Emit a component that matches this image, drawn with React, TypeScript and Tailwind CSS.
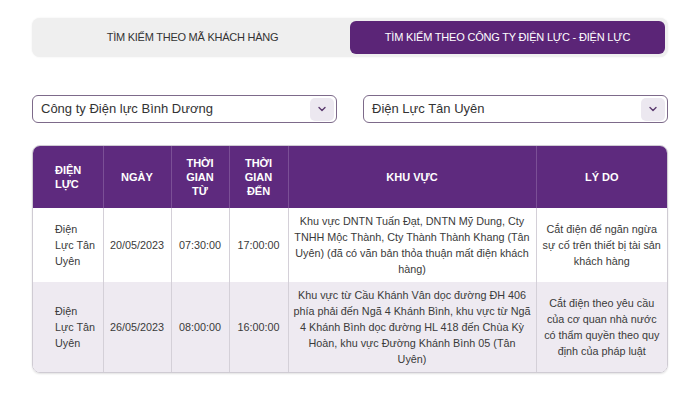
import React from "react";

const font = { fontFamily: '"Liberation Sans", Arial, Helvetica, sans-serif' };

function Chevron() {
  return (
    <svg width="12" height="12" viewBox="0 0 12 12" fill="none">
      <path d="M3 4.5 L6 7.5 L9 4.5" stroke="#5a3a6e" strokeWidth="1.4" strokeLinecap="round" strokeLinejoin="round" />
    </svg>
  );
}

function Select({ label }: { label: string }) {
  return (
    <div className="flex h-[28px] items-center justify-between rounded-[6px] border border-[#7d6a8a] bg-white pl-[8px] pr-[2px]">
      <span className="text-[13px] text-[#333]">{label}</span>
      <span className="flex h-[23px] w-[24px] items-center justify-center rounded-[5px] bg-[#ece8f0]">
        <Chevron />
      </span>
    </div>
  );
}

export default function App() {
  const th = "border-l border-[#7b4f96] py-[10px] text-[11px] font-bold leading-[14px] text-white align-middle";
  const td = "border-l border-[#d4d0d8] py-[5px] text-[10.8px] leading-[16px] text-[#3a3a3a] align-middle";
  return (
    <div className="min-h-[400px] w-[700px] bg-white px-[32px] pt-[18px]" style={font}>
      <div className="grid h-[39px] grid-cols-2 rounded-[8px] bg-[#efefef] p-[3px] shadow-[0_0_2px_rgba(0,0,0,0.08)]">
        <div className="flex items-center justify-center text-[11px] tracking-[-0.25px] text-[#333]">
          TÌM KIẾM THEO MÃ KHÁCH HÀNG
        </div>
        <div className="flex items-center justify-center rounded-[6px] bg-[#5b2577] text-[11px] tracking-[-0.2px] text-white">
          TÌM KIẾM THEO CÔNG TY ĐIỆN LỰC - ĐIỆN LỰC
        </div>
      </div>

      <div className="mt-[38px] grid grid-cols-2 gap-[26px]">
        <Select label="Công ty Điện lực Bình Dương" />
        <Select label="Điện Lực Tân Uyên" />
      </div>

      <div className="mt-[22px] overflow-hidden rounded-[8px] border border-[#cfcbd3] shadow-[0_1px_2px_rgba(0,0,0,0.12)]">
        <table className="w-full table-fixed border-collapse">
          <colgroup>
            <col className="w-[70px]" />
            <col className="w-[68px]" />
            <col className="w-[58px]" />
            <col className="w-[59px]" />
            <col className="w-[248px]" />
            <col />
          </colgroup>
          <thead>
            <tr className="bg-[#5e2a7e]">
              <th className={th + " border-l-0 pl-[22px] text-left"}>ĐIỆN<br />LỰC</th>
              <th className={th + " text-center"}>NGÀY</th>
              <th className={th + " text-center"}>THỜI<br />GIAN<br />TỪ</th>
              <th className={th + " text-center"}>THỜI<br />GIAN<br />ĐẾN</th>
              <th className={th + " text-center"}>KHU VỰC</th>
              <th className={th + " text-center"}>LÝ DO</th>
            </tr>
          </thead>
          <tbody>
            <tr className="bg-white">
              <td className={td + " border-l-0 pl-[22px] text-left"}>Điện<br />Lực Tân<br />Uyên</td>
              <td className={td + " text-center"}>20/05/2023</td>
              <td className={td + " text-center"}>07:30:00</td>
              <td className={td + " text-center"}>17:00:00</td>
              <td className={td + " px-[2px] text-center"}>
                Khu vực DNTN Tuấn Đạt, DNTN Mỹ Dung, Cty<br />
                TNHH Mộc Thành, Cty Thành Thành Khang (Tân<br />
                Uyên) (đã có văn bản thỏa thuận mất điện khách<br />
                hàng)
              </td>
              <td className={td + " px-[2px] text-center"}>
                Cắt điện để ngăn ngừa<br />
                sự cố trên thiết bị tài sản<br />
                khách hàng
              </td>
            </tr>
            <tr className="bg-[#eeeaf1]">
              <td className={td + " border-l-0 pl-[22px] text-left"}>Điện<br />Lực Tân<br />Uyên</td>
              <td className={td + " text-center"}>26/05/2023</td>
              <td className={td + " text-center"}>08:00:00</td>
              <td className={td + " text-center"}>16:00:00</td>
              <td className={td + " px-[2px] text-center"}>
                Khu vực từ Cầu Khánh Vân dọc đường ĐH 406<br />
                phía phải đến Ngã 4 Khánh Bình, khu vực từ Ngã<br />
                4 Khánh Bình dọc đường HL 418 đến Chùa Kỳ<br />
                Hoàn, khu vực Đường Khánh Bình 05 (Tân<br />
                Uyên)
              </td>
              <td className={td + " px-[2px] text-center"}>
                Cắt điện theo yêu cầu<br />
                của cơ quan nhà nước<br />
                có thẩm quyền theo quy<br />
                định của pháp luật
              </td>
            </tr>
          </tbody>
        </table>
      </div>
    </div>
  );
}
